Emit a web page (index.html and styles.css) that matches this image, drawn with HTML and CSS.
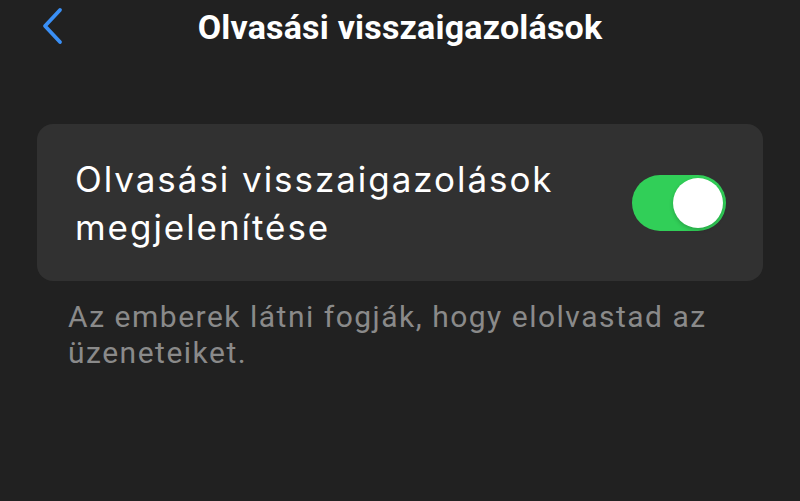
FILE: index.html
```html
<!DOCTYPE html>
<html lang="hu">
<head>
<meta charset="utf-8">
<link rel="stylesheet" href="styles.css">
</head>
<body>
<div class="screen">
  <header class="nav">
    <button class="back" aria-label="Vissza">
      <svg width="26" height="38" viewBox="0 0 26 38"><path d="M20 3 L5 19 L20 35" fill="none" stroke="#3a8ff5" stroke-width="3.8" stroke-linecap="round" stroke-linejoin="round"/></svg>
    </button>
    <h1 class="title">Olvasási visszaigazolások</h1>
  </header>
  <section class="card">
    <div class="label">Olvasási visszaigazolások<br>megjelenítése</div>
    <div class="toggle"><div class="knob"></div></div>
  </section>
  <p class="footnote">Az emberek látni fogják, hogy elolvastad az üzeneteiket.</p>
</div>
</body>
</html>
```
FILE: styles.css
```css
html, body {
  margin: 0;
  background: #212121;
  width: 800px;
  height: 501px;
  overflow: hidden;
}
.screen {
  font-family: Inter, Roboto, "Noto Sans", sans-serif;
  color: #fff;
}
.nav {
  position: relative;
  height: 54px;
  display: flex;
  align-items: center;
  justify-content: center;
}
.back {
  position: absolute;
  left: 40px;
  top: 7px;
  background: none;
  border: 0;
  padding: 0;
  width: 26px;
  height: 38px;
}
.title {
  margin: 0;
  font-family: Roboto, Inter, sans-serif;
  font-weight: 700;
  font-size: 34px;
  letter-spacing: 0.2px;
  line-height: 54px;
}
.card {
  margin: 70px 37px 0 37px;
  height: 157px;
  background: #313131;
  border-radius: 16px;
  display: flex;
  align-items: center;
  justify-content: space-between;
  padding: 0 37px 0 38px;
  box-sizing: border-box;
}
.label {
  font-size: 35px;
  line-height: 48px;
  font-weight: 400;
  letter-spacing: 1.95px;
}
.toggle {
  width: 94px;
  height: 56px;
  border-radius: 28px;
  background: #31cf58;
  display: flex;
  align-items: center;
  justify-content: flex-end;
  padding: 3px;
  box-sizing: border-box;
}
.knob {
  width: 50px;
  height: 50px;
  border-radius: 50%;
  background: #fff;
  box-shadow: 0 2px 4px rgba(0,0,0,0.2);
}
.footnote {
  margin: 18px 40px 0 68px;
  font-family: Roboto, Inter, sans-serif;
  font-size: 30px;
  line-height: 36px;
  letter-spacing: 1.5px;
  color: #8a8a8a;
}
```
